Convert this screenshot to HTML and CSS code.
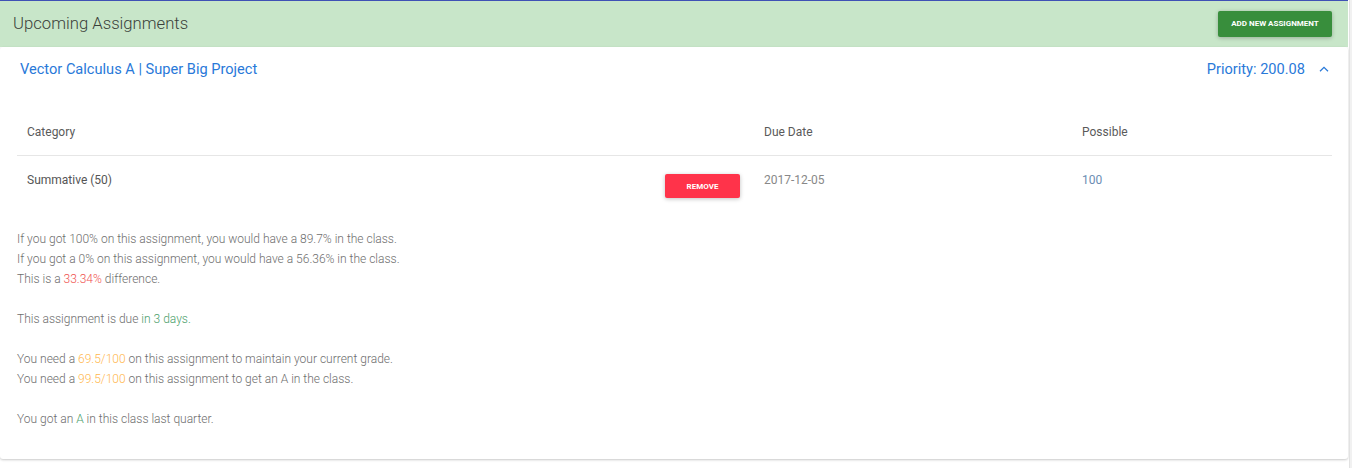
FILE: index.html
```html
<!DOCTYPE html>
<html>
<head>
<meta charset="utf-8">
<link rel="stylesheet" href="styles.css">
</head>
<body>
<div class="page">
  <main class="main">
    <header class="topbar">
      <h1 class="topbar-title">Upcoming Assignments</h1>
      <button class="btn btn-green">Add new assignment</button>
    </header>
    <section class="card">
      <div class="card-header">
        <span class="card-title">Vector Calculus A | Super Big Project</span>
        <div class="card-right">
          <span class="card-title">Priority: 200.08</span>
          <svg class="chev" width="10" height="6" viewBox="0 0 10 6"><path d="M1 5.2 L5 1.4 L9 5.2" fill="none" stroke="#2979d9" stroke-width="1.3"/></svg>
        </div>
      </div>
      <div class="table">
        <div class="trow thead">
          <div class="cell">Category</div>
          <div class="cell">Due Date</div>
          <div class="cell">Possible</div>
        </div>
        <div class="trow tbody">
          <div class="cell cat">
            <span>Summative (50)</span>
            <button class="btn btn-red">Remove</button>
          </div>
          <div class="cell date">2017-12-05</div>
          <div class="cell poss">100</div>
        </div>
      </div>
      <div class="info">
        <p>If you got 100% on this assignment, you would have a 89.7% in the class.</p>
        <p>If you got a 0% on this assignment, you would have a 56.36% in the class.</p>
        <p>This is a <span class="red">33.34%</span> difference.</p>
        <p class="gap">This assignment is due <span class="green">in 3 days.</span></p>
        <p class="gap">You need a <span class="orange">69.5/100</span> on this assignment to maintain your current grade.</p>
        <p>You need a <span class="orange">99.5/100</span> on this assignment to get an A in the class.</p>
        <p class="gap">You got an <span class="green">A</span> in this class last quarter.</p>
      </div>
    </section>
  </main>
  <div class="scroll"></div>
</div>
</body>
</html>
```
FILE: styles.css
```css
* { box-sizing: border-box; }
html, body { margin: 0; padding: 0; }
body {
  font-family: Roboto, "Liberation Sans", sans-serif;
  background: #fff;
  width: 1352px;
  height: 468px;
  overflow: hidden;
}
.page { display: flex; height: 468px; }
.main { width: 1348px; flex: none; }
.scroll {
  flex: 1;
  margin-left: 1px;
  background: #f1f1f1;
  border-left: 1px solid #e2e2e2;
}
.topbar {
  border-top: 1px solid #3f51b5;
  background: #c8e6c9;
  height: 47px;
  display: flex;
  align-items: center;
  justify-content: space-between;
  padding: 0 16px 0 13px;
}
.topbar-title {
  margin: 0;
  font-size: 16.7px;
  font-weight: 300;
  color: #3a3f3a;
  line-height: 24px;
  margin-top: -1px;
}
.btn {
  border: none;
  font-family: Roboto, "Liberation Sans", sans-serif;
  text-transform: uppercase;
  color: #fff;
  font-weight: 700;
  font-size: 8px;
  border-radius: 2px;
  cursor: pointer;
  box-shadow: 0 1px 4px rgba(0,0,0,0.25);
}
.btn-green {
  background: #388e3c;
  width: 114px;
  height: 26px;
  margin-top: -1px;
}
.btn-red {
  background: #ff334a;
  width: 75px;
  height: 24px;
  margin-top: 1px;
}
.card {
  background: #fff;
  border-radius: 3px;
  box-shadow: 0 1px 3px rgba(0,0,0,0.12), 0 1px 2px rgba(0,0,0,0.10);
  padding-bottom: 30px;
}
.card-header {
  height: 44px;
  display: flex;
  align-items: center;
  justify-content: space-between;
  padding: 0 19px 0 20px;
}
.card-title {
  font-size: 14.6px;
  color: #2979d9;
  line-height: 20px;
}
.card-right { display: flex; align-items: center; gap: 14px; }
.chev { display: block; }
.table { margin: 16px 16px 0 17px; }
.trow {
  display: grid;
  grid-template-columns: 737px 318px 260px;
}
.thead {
  height: 49px;
  border-bottom: 1px solid #e6e6e6;
  align-items: center;
  font-size: 12px;
  color: #5a5a5a;
}
.thead .cell { padding: 1px 10px 0; }
.tbody {
  height: 53px;
  font-size: 12px;
  align-items: start;
}
.tbody .cell { padding: 17px 10px 0; line-height: 14px; }
.tbody .cat { padding-right: 14px; }
.cat {
  display: flex;
  justify-content: space-between;
  align-items: flex-start;
  color: #555;
}
.date { color: #888; }
.poss { color: #6b8db3; }
.info {
  padding: 20px 17px 0;
  font-size: 12px;
  font-weight: 300;
  color: #6e6e6e;
}
.info p { margin: 0; line-height: 20px; }
.info p.gap { margin-top: 20px; }
.red { color: #ef5350; }
.green { color: #4a9e6a; }
.orange { color: #ffb74d; }
```
